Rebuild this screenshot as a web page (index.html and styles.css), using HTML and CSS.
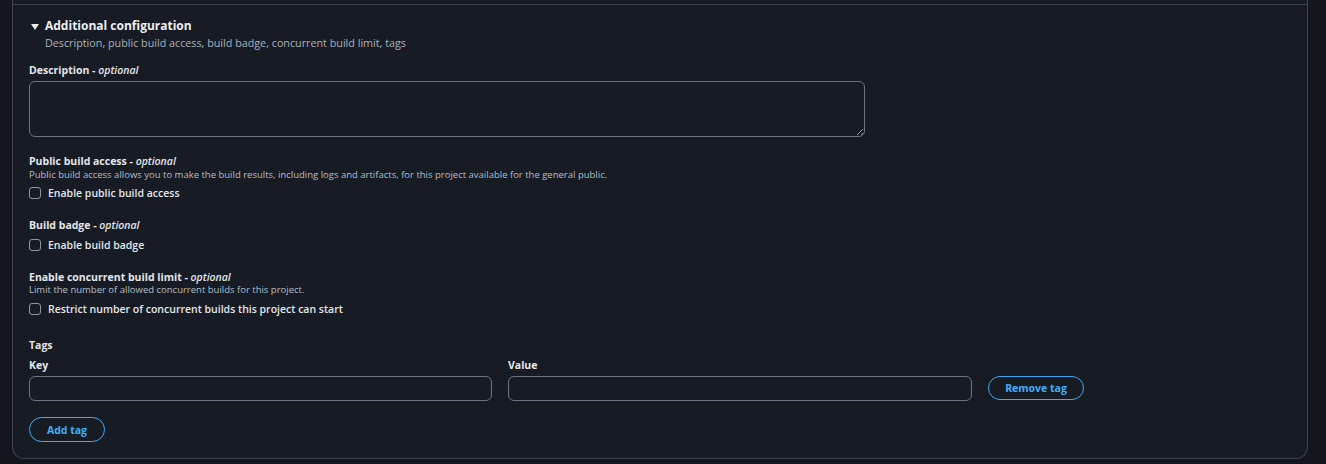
FILE: index.html
```html
<!DOCTYPE html>
<html lang="en">
<head>
<meta charset="utf-8">
<title>Additional configuration</title>
<link rel="stylesheet" href="styles.css">
</head>
<body>
<section class="panel">
  <div class="panel-divider"></div>
  <div class="panel-body">
    <header class="section-head">
      <h2 class="section-title">
        <svg class="caret" width="8" height="6" viewBox="0 0 8 6" aria-hidden="true"><path d="M0 0h8L4 6z"/></svg>
        Additional configuration
      </h2>
      <p class="section-sub">Description, public build access, build badge, concurrent build limit, tags</p>
    </header>

    <div class="field field-desc">
      <label class="label" for="desc">Description - <i>optional</i></label>
      <textarea id="desc" class="textarea"></textarea>
    </div>

    <div class="field field-gap">
      <div class="label">Public build access - <i>optional</i></div>
      <div class="hint">Public build access allows you to make the build results, including logs and artifacts, for this project available for the general public.</div>
      <label class="check check-a"><span class="box"></span>Enable public build access</label>
    </div>

    <div class="field field-gap">
      <div class="label">Build badge - <i>optional</i></div>
      <label class="check check-b"><span class="box"></span>Enable build badge</label>
    </div>

    <div class="field field-gap">
      <div class="label">Enable concurrent build limit - <i>optional</i></div>
      <div class="hint hint-tight">Limit the number of allowed concurrent builds for this project.</div>
      <label class="check check-b"><span class="box"></span>Restrict number of concurrent builds this project can start</label>
    </div>

    <div class="tags">
      <div class="label">Tags</div>
      <div class="tag-row">
        <div class="tag-col">
          <div class="label">Key</div>
          <input class="input" type="text">
        </div>
        <div class="tag-col">
          <div class="label">Value</div>
          <input class="input" type="text">
        </div>
        <button class="btn btn-remove" type="button">Remove tag</button>
      </div>
      <button class="btn btn-add" type="button">Add tag</button>
    </div>
  </div>
</section>
</body>
</html>
```

FILE: styles.css
```css
* {
  box-sizing: border-box;
}

html, body {
  margin: 0;
  height: 464px;
  background: #13171d;
  overflow: hidden;
}

body {
  font-family: "Open Sans", "Noto Sans", "Liberation Sans", sans-serif;
  font-size: 11px;
  line-height: 14px;
  color: #e3e6ea;
  padding: 0 18px 0 12px;
}

.panel {
  width: 1296px;
  height: 459px;
  background: #171c24;
  border: 1px solid #3b4451;
  border-top: none;
  border-radius: 0 0 12px 12px;
  padding-top: 4px;
}

.panel-divider {
  height: 1px;
  background: #3b4451;
}

.panel-body {
  padding: 0 16px 16px 16px;
}

/* header of the expandable section */
.section-head {
  padding-left: 16px;
  margin-top: 13px;
}

.section-title {
  position: relative;
  margin: 0;
  font-size: 12px;
  line-height: 16px;
  font-weight: 700;
  color: #eceef1;
}

.caret {
  position: absolute;
  left: -14px;
  top: 6px;
  fill: #e9ebed;
}

.section-sub {
  margin: 2px 0 0;
  font-size: 10.75px;
  line-height: 14px;
  color: #a9b1bc;
}

/* form fields */
.label {
  display: block;
  font-size: 10.5px;
  line-height: 14px;
  font-weight: 700;
  color: #e3e6ea;
}

.label i {
  font-weight: 600;
}

.field-desc {
  margin-top: 13px;
}

.textarea {
  display: block;
  margin-top: 4px;
  width: 836px;
  height: 56px;
  background: #171c24;
  border: 1px solid #6b7480;
  border-radius: 6px;
  resize: vertical;
}

.field-gap {
  margin-top: 17px;
}

.field-gap + .field-gap {
  margin-top: 18px;
}

.hint {
  margin-top: 1px;
  font-size: 9.5px;
  line-height: 12px;
  color: #b4bcc6;
}

.hint-tight {
  margin-top: 0;
}

.check {
  display: flex;
  align-items: center;
  gap: 7px;
  height: 14px;
  font-size: 10.5px;
  font-weight: 600;
  color: #e3e6ea;
}

.check-a {
  margin-top: 5px;
}

.check-b {
  margin-top: 6px;
}

.box {
  width: 12px;
  height: 12px;
  border: 1px solid #8d97a4;
  border-radius: 3px;
  flex: none;
}

/* tags editor */
.tags {
  margin-top: 22px;
}

.tag-row {
  display: grid;
  grid-template-columns: 463px 464px auto;
  column-gap: 16px;
  align-items: end;
  justify-content: start;
  margin-top: 6px;
}

.tag-col .label {
  margin-bottom: 4px;
}

.input {
  display: block;
  width: 100%;
  height: 25px;
  background: #171c24;
  border: 1px solid #6b7480;
  border-radius: 6px;
}

.btn {
  height: 24px;
  padding: 0;
  background: transparent;
  border: 1px solid #3fa9f5;
  border-radius: 14px;
  color: #42aef7;
  font-family: inherit;
  font-size: 10.5px;
  font-weight: 700;
  line-height: 22px;
}

.btn-remove {
  margin-bottom: 1px;
  width: 96px;
}

.btn-add {
  display: block;
  margin-top: 16px;
  width: 76px;
  height: 25px;
}
```
